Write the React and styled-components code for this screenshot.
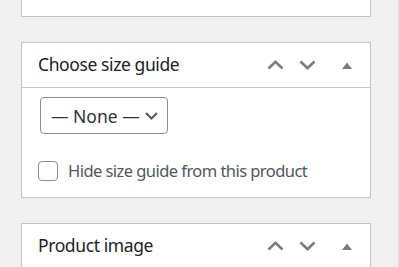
import React from "react";
import styled, { createGlobalStyle } from "styled-components";

const Global = createGlobalStyle`
  html, body { margin: 0; padding: 0; background: #f0f0f1; }
  body { font-family: "Noto Sans", "Open Sans", sans-serif; overflow: hidden; }
`;

const Page = styled.div`
  display: flex;
  height: 267px;
`;

const Main = styled.div`
  width: 350px;
  margin-left: 21px;
  display: flex;
  flex-direction: column;
  gap: 25px;
`;

const Rail = styled.div`
  margin-left: auto;
  width: 0;
  border-left: 1px solid #dcdcde;
`;

const Panel = styled.section`
  background: #fff;
  border: 1px solid #c3c4c7;
  border-top: ${(p) => (p.$clipped ? "none" : "1px solid #c3c4c7")};
  height: ${(p) => (p.$clipped ? "16px" : "auto")};
  flex-shrink: 0;
`;

const Header = styled.div`
  display: flex;
  align-items: center;
  height: 44px;
  padding: 0 0 0 16px;
  border-bottom: ${(p) => (p.$open ? "1px solid #c3c4c7" : "none")};
`;

const Title = styled.h2`
  flex: 1;
  margin: 0;
  font-size: 17.5px;
  letter-spacing: -0.4px;
  font-weight: 400;
  color: #1d2327;
  line-height: 1;
`;

const Actions = styled.div`
  display: flex;
  align-items: center;
  height: 100%;
  margin-right: 18px;
`;

const IconBtn = styled.button`
  border: 0;
  background: none;
  padding: 0;
  margin-left: ${(p) => p.$gap || 0}px;
  width: ${(p) => p.$w}px;
  height: 20px;
  display: flex;
  align-items: center;
  justify-content: center;
  color: #787c82;
  cursor: pointer;
`;

const Body = styled.div`
  padding: 9px 16px 16px 18px;
  display: flex;
  flex-direction: column;
  gap: 27px;
`;

const SelectBox = styled.div`
  box-sizing: border-box;
  width: 128px;
  height: 37px;
  border: 1px solid #8c8f94;
  border-radius: 4px;
  display: flex;
  align-items: center;
  justify-content: space-between;
  padding: 0 9px 0 10px;
  color: #2c3338;
  font-size: 17.5px;
`;

const CheckRow = styled.label`
  display: flex;
  align-items: center;
  gap: 10px;
  margin-left: -2px;
  height: 20px;
  line-height: 20px;
  color: #50575e;
  font-size: 16.5px;
  letter-spacing: -0.55px;
`;

const Box = styled.span`
  box-sizing: border-box;
  width: 20px;
  height: 20px;
  border: 1px solid #8c8f94;
  border-radius: 4px;
  background: #fff;
  flex-shrink: 0;
`;

const Up = () => (
  <svg width="17" height="10" viewBox="0 0 17 10">
    <path d="M1.5 8.5 L8.5 1.8 L15.5 8.5" fill="none" stroke="currentColor" strokeWidth="2.6" />
  </svg>
);
const Down = () => (
  <svg width="17" height="10" viewBox="0 0 17 10">
    <path d="M1.5 1.5 L8.5 8.2 L15.5 1.5" fill="none" stroke="currentColor" strokeWidth="2.6" />
  </svg>
);
const Tri = () => (
  <svg width="10" height="7" viewBox="0 0 10 7">
    <path d="M0 7 L5 0.5 L10 7 Z" fill="currentColor" />
  </svg>
);
const SelChev = () => (
  <svg width="13" height="8" viewBox="0 0 13 8">
    <path d="M1 1 L6.5 6.5 L12 1" fill="none" stroke="#50575e" strokeWidth="2" />
  </svg>
);

const PanelHeader = ({ title, open }) => (
  <Header $open={open}>
    <Title>{title}</Title>
    <Actions>
      <IconBtn $w={17} aria-label="Move up"><Up /></IconBtn>
      <IconBtn $w={17} $gap={15} aria-label="Move down"><Down /></IconBtn>
      <IconBtn $w={10} $gap={26} aria-label="Toggle panel"><Tri /></IconBtn>
    </Actions>
  </Header>
);

export default function App() {
  return (
    <>
      <Global />
      <Page>
        <Main>
          <Panel $clipped />
          <Panel>
            <PanelHeader title="Choose size guide" open />
            <Body>
              <SelectBox>
                <span>— None —</span>
                <SelChev />
              </SelectBox>
              <CheckRow>
                <Box />
                <span>Hide size guide from this product</span>
              </CheckRow>
            </Body>
          </Panel>
          <Panel>
            <PanelHeader title="Product image" />
          </Panel>
        </Main>
        <Rail />
      </Page>
    </>
  );
}
